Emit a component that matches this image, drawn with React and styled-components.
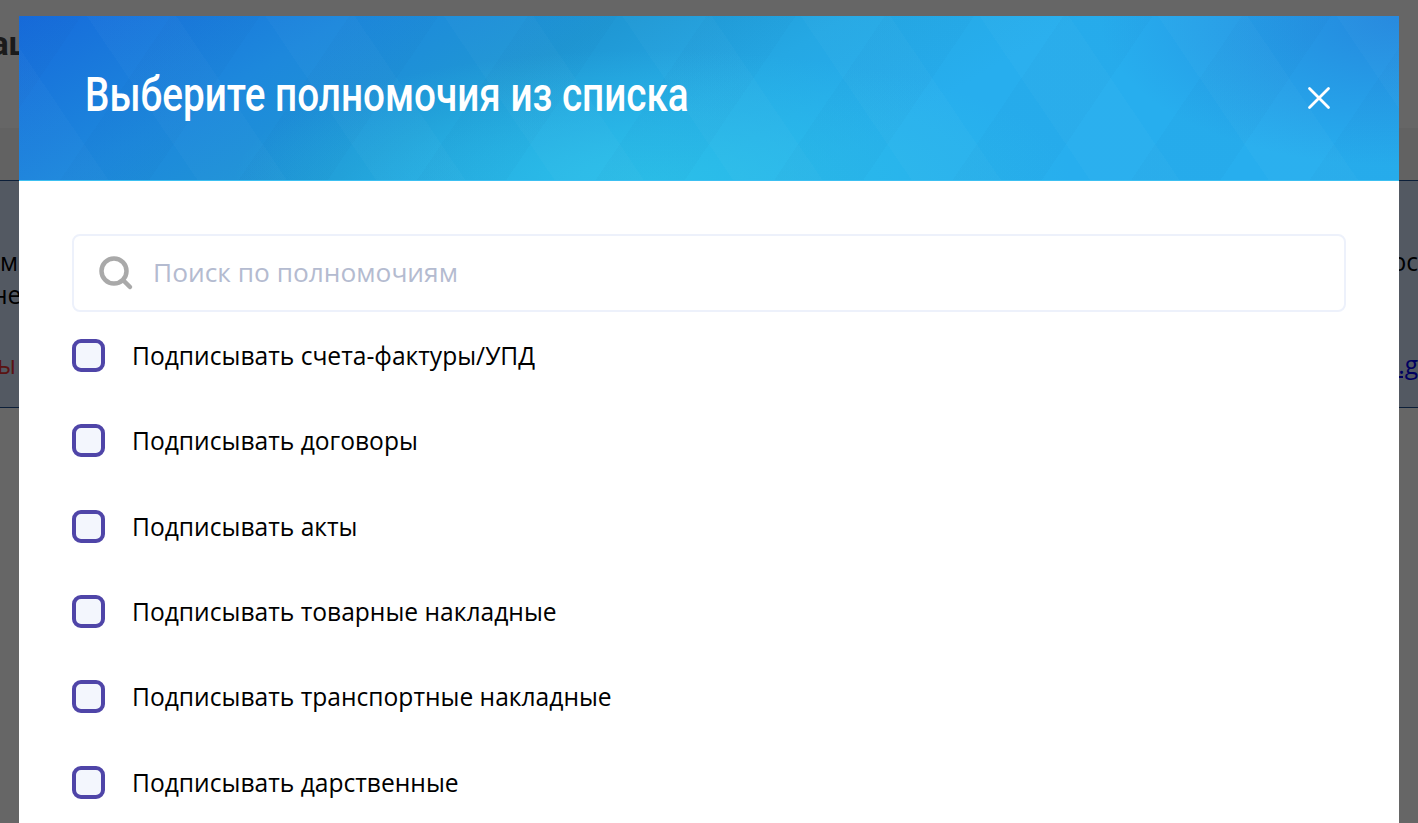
import React from "react";
import styled, { createGlobalStyle } from "styled-components";

const GlobalStyle = createGlobalStyle`
  html, body {
    margin: 0;
    padding: 0;
    height: 100%;
    overflow: hidden;
    background: #fff;
    font-family: "Open Sans", "Noto Sans", sans-serif;
  }
`;

const Page = styled.div`
  position: relative;
  height: 823px;
  overflow: hidden;
`;

const TopBar = styled.div`
  height: 128px;
  box-sizing: border-box;
  padding-top: 24px;
  font-family: "Roboto", sans-serif;
  font-size: 33px;
  line-height: 40px;
  font-weight: 700;
  color: #444;
  margin-left: -9px;
`;

const Strip = styled.div`
  height: 52px;
  background: #f6f6f6;
`;

const Banner = styled.div`
  height: 228px;
  box-sizing: border-box;
  background: #cfdef5;
  border-top: 1px solid #1f4f8f;
  border-bottom: 1px solid #1f4f8f;
  display: flex;
  justify-content: space-between;
  padding-top: 64px;
  font-size: 24.6px;
  line-height: 33px;
  color: #000;
`;

const BannerColumn = styled.div`
  display: flex;
  flex-direction: column;
  align-items: ${(p) => (p.$right ? "flex-end" : "flex-start")};
`;

const Line = styled.div`
  margin-left: ${(p) => p.$shift || 0}px;
  margin-top: ${(p) => p.$gap || 0}px;
  white-space: nowrap;
`;

const Warning = styled(Line)`
  color: #e03030;
`;

const LinkText = styled.a`
  margin-top: 37px;
  color: #0000ee;
  text-decoration: underline;
  white-space: nowrap;
`;

const Overlay = styled.div`
  position: absolute;
  inset: 0;
  background: rgba(0, 0, 0, 0.6);
`;

const Modal = styled.div`
  position: absolute;
  top: 16px;
  left: 19px;
  width: 1380px;
  background: #fff;
`;

const ModalHeader = styled.div`
  height: 165px;
  box-sizing: border-box;
  padding: 0 66px;
  display: flex;
  align-items: center;
  justify-content: space-between;
  border-bottom: 1px solid #3cc0f2;
  background:
    repeating-linear-gradient(56deg, rgba(255, 255, 255, 0.018) 0 74px, rgba(255, 255, 255, 0) 74px 148px),
    repeating-linear-gradient(-56deg, rgba(0, 30, 90, 0.02) 0 74px, rgba(0, 30, 90, 0) 74px 148px),
    radial-gradient(300px 150px at 100% 0%, #2488de 0%, rgba(36, 136, 222, 0) 100%),
    radial-gradient(420px 130px at 46% 100%, #2bbfe9 0%, rgba(43, 191, 233, 0) 100%),
    linear-gradient(150deg, #166bdb 0%, #1d88dc 20%, #1f97d4 36%, #25a8e4 50%, #27aeee 64%, #27aeee 100%);
`;

const ModalTitle = styled.h2`
  margin: 0 0 6px;
  font-family: "Roboto", sans-serif;
  font-size: 48px;
  line-height: 50px;
  font-weight: 500;
  color: #fff;
  white-space: nowrap;
  transform: scaleX(0.806);
  transform-origin: left center;
`;

const CloseButton = styled.button`
  width: 26px;
  height: 26px;
  padding: 0;
  margin-right: 1px;
  border: none;
  background: none;
  display: flex;
  cursor: pointer;
`;

const ModalBody = styled.div`
  padding: 53px 53px 60px;
`;

const SearchBox = styled.label`
  height: 78px;
  box-sizing: border-box;
  border: 2px solid #edf1fb;
  border-radius: 8px;
  padding: 0 24px;
  display: flex;
  align-items: center;
  gap: 19px;
`;

const SearchInput = styled.input`
  flex: 1;
  border: none;
  outline: none;
  padding: 0 0 2px;
  font: inherit;
  font-size: 26.3px;
  color: #000;

  &::placeholder {
    color: #b4bbd0;
    opacity: 1;
  }
`;

const Options = styled.div`
  margin-top: 1px;
  display: flex;
  flex-direction: column;
`;

const OptionRow = styled.label`
  height: 85.3px;
  display: flex;
  align-items: center;
  gap: 27px;
  font-size: 24.6px;
  color: #000;
  cursor: pointer;
`;

const CheckBox = styled.span`
  width: 33px;
  height: 33px;
  box-sizing: border-box;
  flex: none;
  border: 4px solid #4f45a8;
  border-radius: 9px;
  background: #f3f6fd;
`;

const options = [
  "Подписывать счета-фактуры/УПД",
  "Подписывать договоры",
  "Подписывать акты",
  "Подписывать товарные накладные",
  "Подписывать транспортные накладные",
  "Подписывать дарственные",
];

export default function App() {
  return (
    <Page>
      <GlobalStyle />
      <TopBar>ащ</TopBar>
      <Strip />
      <Banner>
        <BannerColumn>
          <Line>м</Line>
          <Line $shift={-8}>не</Line>
          <Warning $gap={37} $shift={-3}>ы</Warning>
        </BannerColumn>
        <BannerColumn $right>
          <Line>ос</Line>
          <Line>&nbsp;</Line>
          <LinkText href="#">t.g</LinkText>
        </BannerColumn>
      </Banner>
      <Overlay />
      <Modal>
        <ModalHeader>
          <ModalTitle>Выберите полномочия из списка</ModalTitle>
          <CloseButton aria-label="Закрыть">
            <svg width="26" height="26" viewBox="0 0 26 26" fill="none">
              <path d="M3.5 3.5 L22.5 22.5 M22.5 3.5 L3.5 22.5" stroke="#fff" strokeWidth="2.8" strokeLinecap="round" />
            </svg>
          </CloseButton>
        </ModalHeader>
        <ModalBody>
          <SearchBox>
            <svg width="36" height="36" viewBox="0 0 36 36" fill="none">
              <circle cx="16" cy="16" r="12.5" stroke="#a9a9a9" strokeWidth="4.5" />
              <path d="M25.5 25.5 L32 32" stroke="#a9a9a9" strokeWidth="4.5" strokeLinecap="round" />
            </svg>
            <SearchInput placeholder="Поиск по полномочиям" />
          </SearchBox>
          <Options>
            {options.map((text) => (
              <OptionRow key={text}>
                <CheckBox />
                {text}
              </OptionRow>
            ))}
          </Options>
        </ModalBody>
      </Modal>
    </Page>
  );
}
